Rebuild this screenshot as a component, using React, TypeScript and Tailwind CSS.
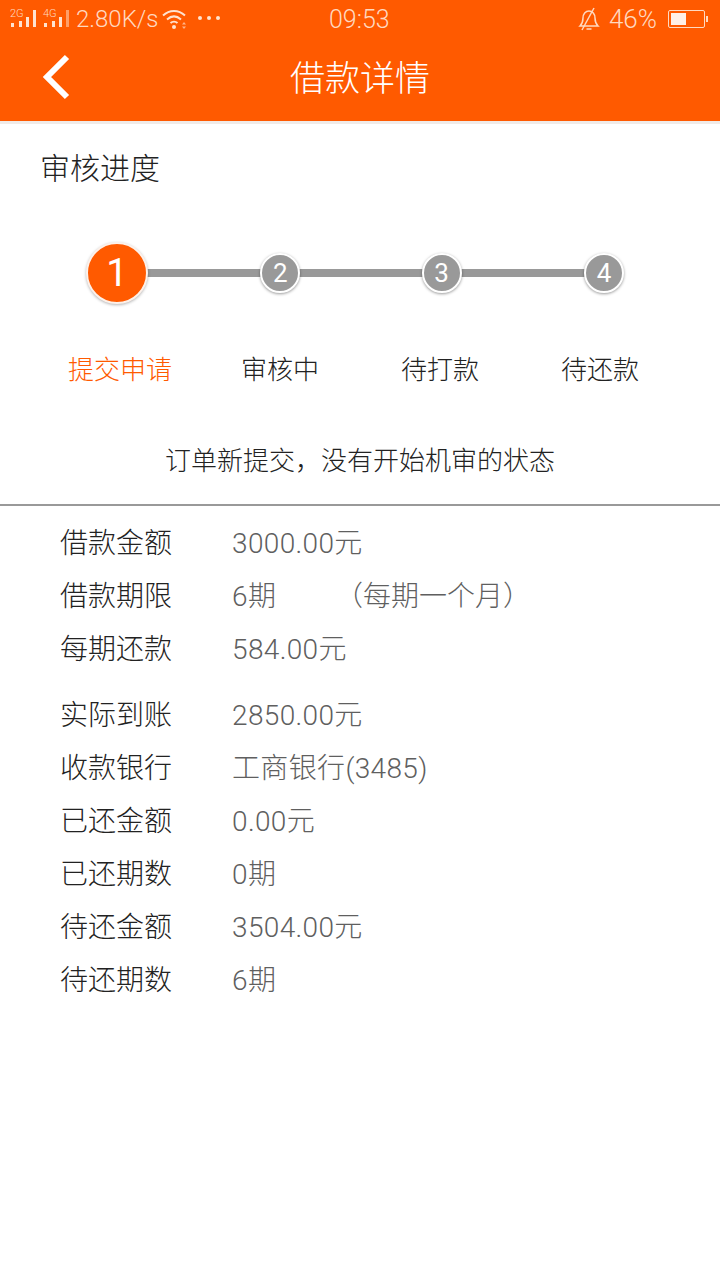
const font = { fontFamily: '"Roboto", "Noto Sans CJK SC", sans-serif' };

const groupOne = [
  { label: "借款金额", value: "3000.00元" },
  { label: "借款期限", value: "6期", note: "（每期一个月）" },
  { label: "每期还款", value: "584.00元" },
];

const groupTwo = [
  { label: "实际到账", value: "2850.00元" },
  { label: "收款银行", value: "工商银行(3485)" },
  { label: "已还金额", value: "0.00元" },
  { label: "已还期数", value: "0期" },
  { label: "待还金额", value: "3504.00元" },
  { label: "待还期数", value: "6期" },
];

const steps = ["提交申请", "审核中", "待打款", "待还款"];

function Signal({ tag, dimLast }: { tag: string; dimLast?: boolean }) {
  return (
    <div className="relative h-[20px] w-[27px]">
      <span className="absolute left-0 top-[-1px] text-[11px] leading-[11px] text-[#ffd9c0]">{tag}</span>
      <svg width="27" height="20" viewBox="0 0 27 20" className="absolute left-0 top-0">
        <rect x="1" y="14" width="3" height="4" fill="#ffe3d0" />
        <rect x="9" y="12" width="3" height="6" fill="#ffe3d0" />
        <rect x="16" y="8" width="3" height="10" fill="#ffe3d0" />
        <rect x="23" y="1" width="3" height="17" fill="#ffe3d0" opacity={dimLast ? 0.5 : 1} />
      </svg>
    </div>
  );
}

function StatusBar() {
  return (
    <div className="relative flex h-[38px] items-center justify-between pl-[10px] pr-[12px] text-[24px] font-light text-[#ffd9c0]">
      <div className="flex items-center">
        <Signal tag="2G" />
        <div className="ml-[6px]">
          <Signal tag="4G" dimLast />
        </div>
        <span className="ml-[6px] leading-none">2.80K/s</span>
        <svg width="26" height="22" viewBox="0 0 26 22" fill="none" className="ml-[3px]">
          <path d="M1 7.5C7.5 1.5 16.5 1.5 23 7.5" stroke="#ffe3d0" strokeWidth="2" />
          <path d="M5 11.5C9.5 7.5 14.5 7.5 19 11.5" stroke="#ffe3d0" strokeWidth="2" />
          <path d="M8.5 15C10.5 13.2 13.5 13.2 15.5 15" stroke="#ffe3d0" strokeWidth="2" />
          <circle cx="12" cy="19" r="2" fill="#ffe3d0" />
          <path d="M22 14l2 2.5h-4zM22 21l2-2.5h-4z" fill="#ffb58a" />
        </svg>
        <div className="ml-[10px] flex gap-[5px] pb-[2px]">
          <span className="h-[4px] w-[4px] rounded-full bg-[#ffe3d0]" />
          <span className="h-[4px] w-[4px] rounded-full bg-[#ffe3d0]" />
          <span className="h-[4px] w-[4px] rounded-full bg-[#ffe3d0]" />
        </div>
      </div>
      <span className="absolute left-[329px] top-[5px] text-[25px] leading-[30px]">09:53</span>
      <div className="flex items-center text-[26px]">
        <svg width="22" height="24" viewBox="0 0 22 24" fill="none" stroke="#ffd9c0" strokeWidth="1.5">
          <path d="M2 19c2-2 3-4 3-8 0-4 2.500-7 6-7s6 3 6 7c0 4 1 6 3 8z" />
          <path d="M8.500 22h5" />
          <path d="M16 1L4 23" />
        </svg>
        <span className="ml-[9px] leading-none">46%</span>
        <div className="ml-[11px] flex items-center">
          <div className="h-[18px] w-[37px] rounded-[2px] border border-[#ffd9c0] p-[2px]">
            <div className="h-full w-[15px] bg-[#fff0e6]" />
          </div>
          <div className="ml-[1px] h-[6px] w-[2px] bg-[#ffd9c0]" />
        </div>
      </div>
    </div>
  );
}

function StepDot({ n, active }: { n: number; active?: boolean }) {
  if (active) {
    return (
      <div className="relative z-10 -my-[1px] -ml-[1px] flex h-[62px] w-[62px] shrink-0 items-center justify-center rounded-full border-2 border-[#fdf1ea] bg-[#ff5a00] text-[38px] text-white shadow-[0_1px_3px_rgba(0,0,0,0.3)]">
        {n}
      </div>
    );
  }
  return (
    <div className="relative z-10 flex h-[40px] w-[40px] shrink-0 items-center justify-center rounded-full border-2 border-white bg-[#999999] text-[26px] text-white shadow-[0_1px_3px_rgba(0,0,0,0.4)]">
      {n}
    </div>
  );
}

function InfoRow({ label, value, note }: { label: string; value: string; note?: string }) {
  return (
    <div className="flex h-[53px] items-center pl-[60px] text-[28px] font-light">
      <span className="w-[172px] text-[#222222]">{label}</span>
      <span className="w-[101px] whitespace-nowrap tracking-[0.35px] text-[#5f5f5f]">{value}</span>
      {note && <span className="ml-[2px] whitespace-nowrap text-[#5f5f5f]">{note}</span>}
    </div>
  );
}

export default function App() {
  return (
    <div className="h-[1280px] w-[720px] overflow-hidden bg-white" style={font}>
      <div className="h-[121px] bg-[#ff5a00]">
        <StatusBar />
        <div className="relative flex h-[83px] items-center justify-center pt-[2px]">
          <svg width="32" height="48" viewBox="0 0 32 48" fill="none" className="absolute left-[41px] top-[15px]">
            <path d="M26 4L6 24L26 44" stroke="white" strokeWidth="6" />
          </svg>
          <span className="text-[35px] font-light text-white">借款详情</span>
        </div>
      </div>
      <div className="h-[3px] bg-[#f0ebe8]" />

      <h2 className="ml-[40px] mt-[23px] text-[30px] font-light leading-[44px] text-[#222222]">审核进度</h2>

      <div className="relative mx-[87px] mt-[52px] flex items-center justify-between pr-[9px]">
        <div className="absolute left-[40px] right-[20px] top-[26px] h-[8px] bg-[#999999]" />
        <StepDot n={1} active />
        <div className="ml-[53px]">
          <StepDot n={2} />
        </div>
        <div className="ml-[62px]">
          <StepDot n={3} />
        </div>
        <div className="ml-[63px]">
          <StepDot n={4} />
        </div>
      </div>

      <div className="mt-[45px] grid grid-cols-4 px-[40px] text-center text-[26px] font-light leading-[44px] text-[#222222]">
        {steps.map((s, i) => (
          <span key={s} className={i === 0 ? "text-[#ff5a00]" : ""}>
            {s}
          </span>
        ))}
      </div>

      <p className="mt-[47px] text-center text-[26px] font-light leading-[44px] text-[#222222]">
        订单新提交，没有开始机审的状态
      </p>

      <div className="mt-[21px] h-[2px] bg-[#999999]" />

      <div className="mt-[11px]">
        {groupOne.map((r) => (
          <InfoRow key={r.label} {...r} />
        ))}
      </div>
      <div className="mt-[13px]">
        {groupTwo.map((r) => (
          <InfoRow key={r.label} {...r} />
        ))}
      </div>
    </div>
  );
}
